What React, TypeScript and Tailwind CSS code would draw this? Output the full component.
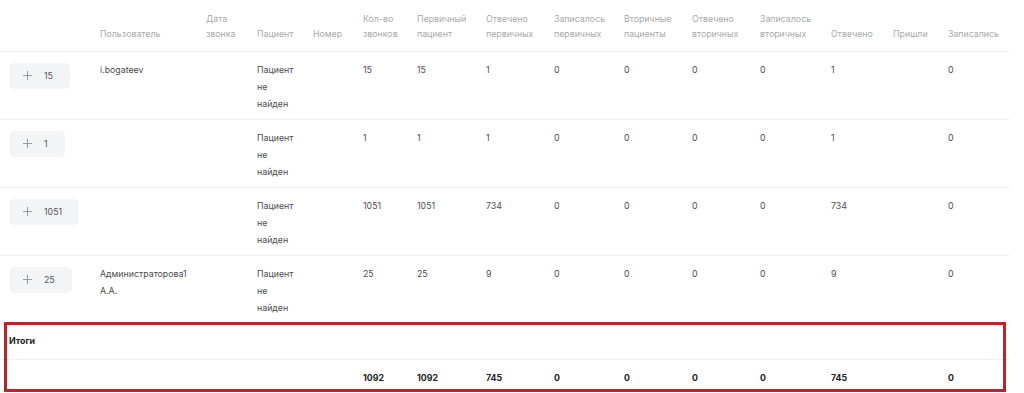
import React from 'react';

interface Row {
  count: number;
  user: string[];
  calls: number;
  primary: number;
  answeredPrimary: number;
  signedPrimary: number;
  secondary: number;
  answeredSecondary: number;
  signedSecondary: number;
  answered: number;
  came: string;
  signed: number;
}

const rows: Row[] = [
  { count: 15, user: ['i.bogateev'], calls: 15, primary: 15, answeredPrimary: 1, signedPrimary: 0, secondary: 0, answeredSecondary: 0, signedSecondary: 0, answered: 1, came: '', signed: 0 },
  { count: 1, user: [], calls: 1, primary: 1, answeredPrimary: 1, signedPrimary: 0, secondary: 0, answeredSecondary: 0, signedSecondary: 0, answered: 1, came: '', signed: 0 },
  { count: 1051, user: [], calls: 1051, primary: 1051, answeredPrimary: 734, signedPrimary: 0, secondary: 0, answeredSecondary: 0, signedSecondary: 0, answered: 734, came: '', signed: 0 },
  { count: 25, user: ['Администраторова1', 'А.А.'], calls: 25, primary: 25, answeredPrimary: 9, signedPrimary: 0, secondary: 0, answeredSecondary: 0, signedSecondary: 0, answered: 9, came: '', signed: 0 },
];

const widths = [92, 106, 51, 56, 50, 54, 69, 68, 70, 68, 68, 71, 62, 55, 70];

const headers: string[][] = [
  [],
  ['Пользователь'],
  ['Дата', 'звонка'],
  ['Пациент'],
  ['Номер'],
  ['Кол-во', 'звонков'],
  ['Первичный', 'пациент'],
  ['Отвечено', 'первичных'],
  ['Записалось', 'первичных'],
  ['Вторичные', 'пациенты'],
  ['Отвечено', 'вторичных'],
  ['Записалось', 'вторичных'],
  ['Отвечено'],
  ['Пришли'],
  ['Записались'],
];

const totals = ['', '', '', '', '', '1092', '1092', '745', '0', '0', '0', '0', '745', '', '0'];

function Lines({ lines }: { lines: string[] }) {
  return (
    <>
      {lines.map((l, i) => (
        <div key={i} className="whitespace-nowrap">{l}</div>
      ))}
    </>
  );
}

export default function App() {
  const cell = 'pl-2 align-top pt-[9px] leading-[17px]';
  return (
    <div className="w-[1024px] h-[393px] overflow-hidden bg-white font-['Inter',sans-serif] text-[8.8px] text-[#4b4b4b]">
      <table className="table-fixed border-collapse w-[1010px]">
        <colgroup>
          {widths.map((w, i) => (
            <col key={i} style={{ width: w }} />
          ))}
        </colgroup>
        <thead>
          <tr className="h-[51px] border-b border-[#eeeeee]">
            {headers.map((h, i) => (
              <th key={i} className="pl-2 pb-[10px] align-bottom text-left font-normal leading-[15px] text-[#a8a8a8]">
                <Lines lines={h} />
              </th>
            ))}
          </tr>
        </thead>
        <tbody>
          {rows.map((r, i) => (
            <tr key={i} className="h-[68px] border-b border-[#f0f0f0]">
              <td className="pl-[9px] align-top pt-[11px]">
                <div className="inline-flex items-center gap-[12px] h-[26px] pl-[14px] pr-[17px] rounded-[5px] bg-[#f3f4f6] text-[#555]">
                  <svg width="9" height="9" viewBox="0 0 9 9" className="text-[#999]">
                    <path d="M4.5 0v9M0 4.5h9" stroke="currentColor" strokeWidth="1" />
                  </svg>
                  <span>{r.count}</span>
                </div>
              </td>
              <td className={cell}><Lines lines={r.user} /></td>
              <td className={cell}></td>
              <td className={cell}><Lines lines={['Пациент', 'не', 'найден']} /></td>
              <td className={cell}></td>
              <td className={cell}>{r.calls}</td>
              <td className={cell}>{r.primary}</td>
              <td className={cell}>{r.answeredPrimary}</td>
              <td className={cell}>{r.signedPrimary}</td>
              <td className={cell}>{r.secondary}</td>
              <td className={cell}>{r.answeredSecondary}</td>
              <td className={cell}>{r.signedSecondary}</td>
              <td className={cell}>{r.answered}</td>
              <td className={cell}>{r.came}</td>
              <td className={cell}>{r.signed}</td>
            </tr>
          ))}
          <tr className="h-[36px] border-b border-[#f0f0f0]">
            <td colSpan={15} className="pl-[9px] align-middle font-bold text-[#222]">Итоги</td>
          </tr>
          <tr className="h-[40px]">
            {totals.map((t, i) => (
              <td key={i} className="pl-2 align-middle pb-[3px] font-bold text-[#222]">{t}</td>
            ))}
          </tr>
        </tbody>
      </table>
      <div className="absolute left-[4px] top-[322px] w-[1002px] h-[70px] border-[3px] border-[#b8262b] pointer-events-none" />
    </div>
  );
}
